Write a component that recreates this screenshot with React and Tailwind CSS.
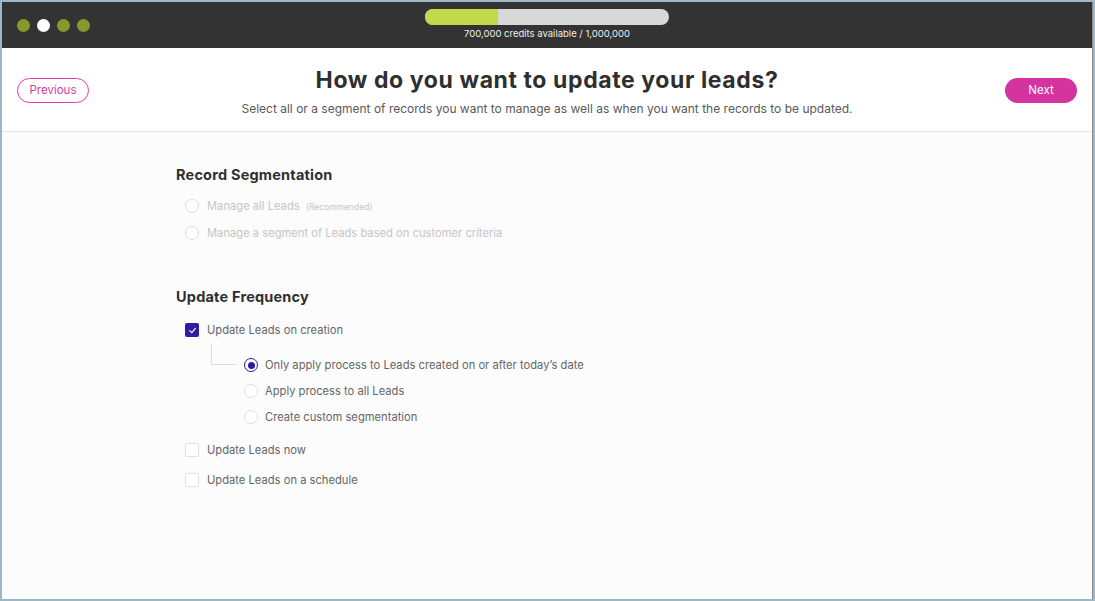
import React from "react";

const body = { fontFamily: "Inter, 'Noto Sans', sans-serif" };
const head = { fontFamily: "Inter, 'Noto Sans', sans-serif" };

function Radio({ checked, faded }) {
  return (
    <span
      className={`flex h-[14px] w-[14px] shrink-0 items-center justify-center rounded-full border ${
        checked ? "border-[#2c1a9e] border-[1.5px]" : faded ? "border-[#dcdcdc]" : "border-[#e0e0e0]"
      } bg-white`}
    >
      {checked && <span className="h-[7px] w-[7px] rounded-full bg-[#2c1a9e]" />}
    </span>
  );
}

function Checkbox({ checked }) {
  return checked ? (
    <span className="flex h-[14px] w-[14px] shrink-0 items-center justify-center rounded-[2px] bg-[#321ca0]">
      <svg width="9" height="9" viewBox="0 0 10 10" fill="none">
        <path d="M2 5.2 L4.2 7.3 L8.2 2.6" stroke="white" strokeWidth="1.3" strokeLinecap="round" strokeLinejoin="round" />
      </svg>
    </span>
  ) : (
    <span className="h-[14px] w-[14px] shrink-0 rounded-[1px] border border-[#e2e2e2] bg-white" />
  );
}

export default function App() {
  return (
    <div className="h-[601px] w-[1095px] bg-[#9bb8c6] pb-[2px] pl-[2px] pr-[2px] pt-[2px]" style={body}>
      <div className="flex h-full flex-col border-r border-[#8a8a8a] bg-[#fcfcfc]">
        {/* top bar */}
        <div className="relative flex h-[46px] shrink-0 items-center bg-[#333333] pl-[15px]">
          <div className="flex items-center gap-[7px]">
            <span className="h-[13px] w-[13px] rounded-full bg-[#87992e]" />
            <span className="h-[13px] w-[13px] rounded-full bg-white" />
            <span className="h-[13px] w-[13px] rounded-full bg-[#87992e]" />
            <span className="h-[13px] w-[13px] rounded-full bg-[#87992e]" />
          </div>
          <div className="absolute left-[423px] top-[7px] flex w-[244px] flex-col items-center">
            <div className="flex h-[16px] w-full overflow-hidden rounded-full bg-[#d8d8d8]">
              <div className="h-full w-[30%] bg-[#c3d84a]" />
            </div>
            <div className="mt-[3px] text-[9.5px] leading-[12px] text-[#eeeeee]">700,000 credits available / 1,000,000</div>
          </div>
        </div>
        {/* header */}
        <div className="flex h-[84px] shrink-0 items-center justify-between border-b border-[#e6e6e6] bg-white px-[15px]">
          <button className="mt-[2px] h-[25px] w-[72px] rounded-full border border-[#e040a8] text-[11.5px] text-[#d83aa2]">
            Previous
          </button>
          <div className="flex flex-col items-center pt-[3px]">
            <h1 className="text-[23px] font-bold leading-[28px] tracking-[0.6px] text-[#2f2f2f]" style={head}>
              How do you want to update your leads?
            </h1>
            <p className="mt-[7px] text-[12px] leading-[16px] text-[#5a5a5a]">
              Select all or a segment of records you want to manage as well as when you want the records to be updated.
            </p>
          </div>
          <button className="mt-[2px] h-[25px] w-[72px] rounded-full bg-[#d5339f] text-[11.5px] text-white">Next</button>
        </div>
        {/* content */}
        <div className="flex flex-col pl-[174px] pt-[33px]">
          <h2 className="text-[14.5px] font-bold leading-[20px] tracking-[0.2px] text-[#2f2f2f]" style={head}>
            Record Segmentation
          </h2>
          <div className="mt-[14px] flex flex-col gap-[13px] pl-[9px]">
            <div className="flex h-[14px] items-center gap-[8px]">
              <Radio faded />
              <span className="text-[11.2px] text-[#c6c6c6]">
                Manage all Leads <span className="ml-[3px] text-[8.5px]">(Recommended)</span>
              </span>
            </div>
            <div className="flex h-[14px] items-center gap-[8px]">
              <Radio faded />
              <span className="text-[11.2px] text-[#c6c6c6]">Manage a segment of Leads based on customer criteria</span>
            </div>
          </div>

          <h2 className="mt-[47px] text-[14.5px] font-bold leading-[20px] tracking-[0.2px] text-[#2f2f2f]" style={head}>
            Update Frequency
          </h2>
          <div className="mt-[16px] flex flex-col pl-[9px]">
            <div className="flex h-[14px] items-center gap-[8px]">
              <Checkbox checked />
              <span className="text-[11.2px] text-[#666666]">Update Leads on creation</span>
            </div>
            <div className="flex">
              <div className="ml-[26px] mt-[7px] h-[21px] w-[26px] border-b border-l border-[#dedede]" />
              <div className="ml-[7px] mt-[21px] flex flex-col gap-[12px]">
                <div className="flex h-[14px] items-center gap-[7px]">
                  <Radio checked />
                  <span className="text-[11.2px] text-[#666666]">Only apply process to Leads created on or after today’s date</span>
                </div>
                <div className="flex h-[14px] items-center gap-[7px]">
                  <Radio />
                  <span className="text-[11.2px] text-[#666666]">Apply process to all Leads</span>
                </div>
                <div className="flex h-[14px] items-center gap-[7px]">
                  <Radio />
                  <span className="text-[11.2px] text-[#666666]">Create custom segmentation</span>
                </div>
              </div>
            </div>
            <div className="mt-[19px] flex flex-col gap-[16px]">
              <div className="flex h-[14px] items-center gap-[8px]">
                <Checkbox />
                <span className="text-[11.2px] text-[#666666]">Update Leads now</span>
              </div>
              <div className="flex h-[14px] items-center gap-[8px]">
                <Checkbox />
                <span className="text-[11.2px] text-[#666666]">Update Leads on a schedule</span>
              </div>
            </div>
          </div>
        </div>
      </div>
    </div>
  );
}
